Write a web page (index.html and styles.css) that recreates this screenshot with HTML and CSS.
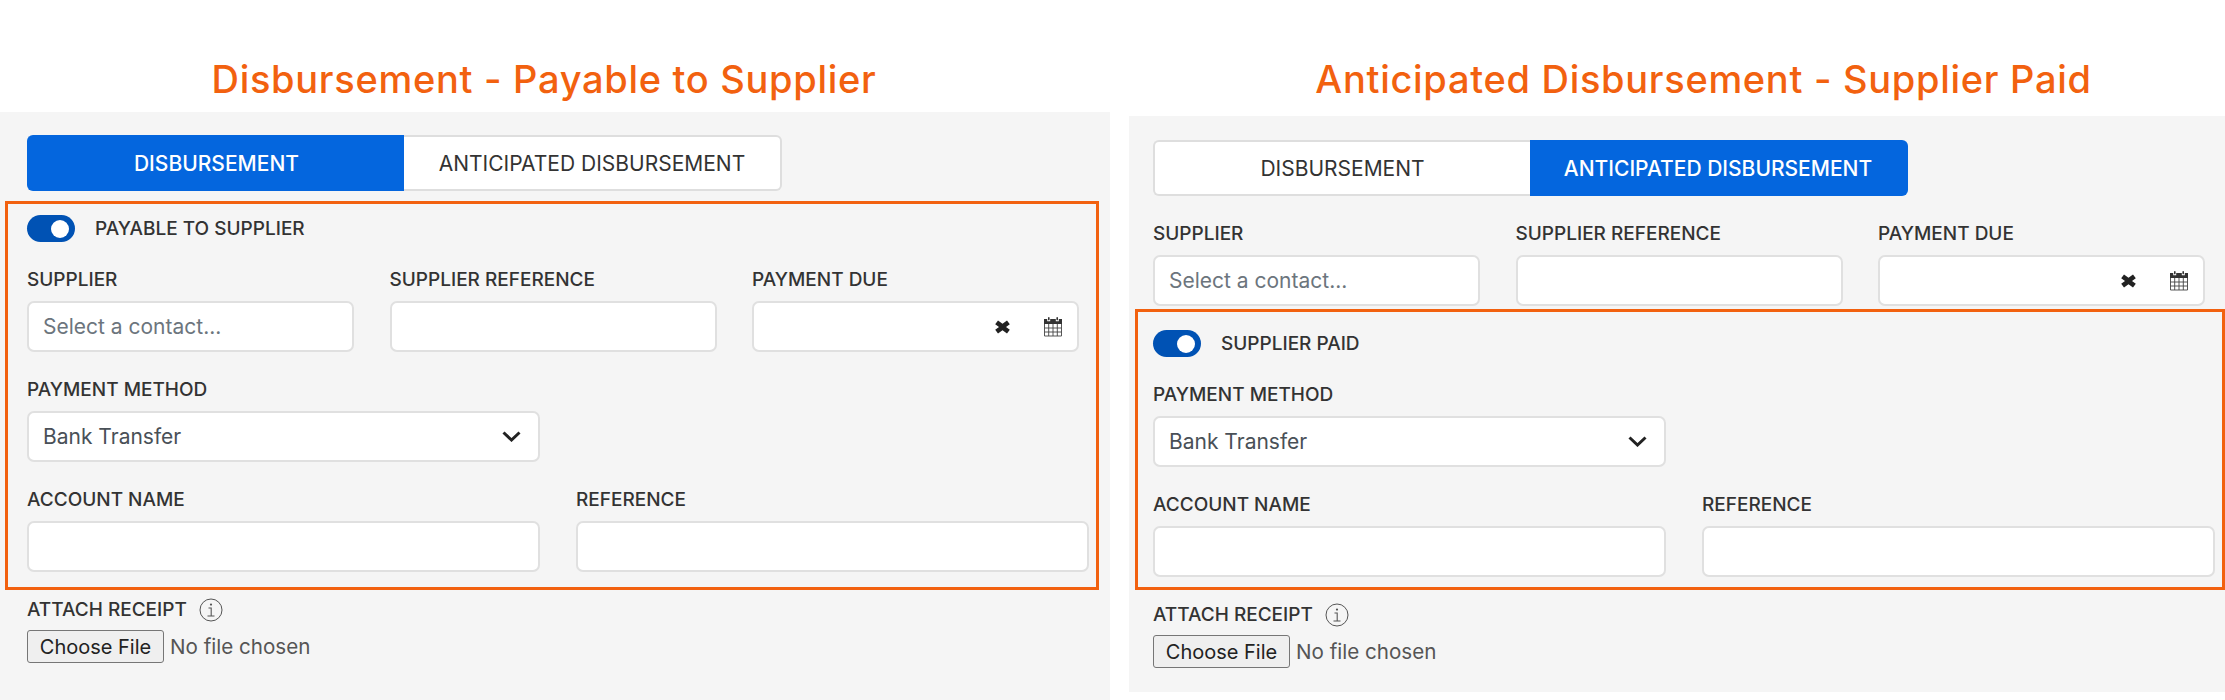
FILE: index.html
```html
<!DOCTYPE html>
<html lang="en">
<head>
  <meta charset="UTF-8" />
  <title>Disbursement</title>
  <link rel="stylesheet" href="styles.css">
</head>
<body>
  <div class="page">

    <section class="col col-left">
      <h1 class="title">Disbursement - Payable to Supplier</h1>
      <div class="panel">
        <div class="tabs">
          <button class="tab active">DISBURSEMENT</button>
          <button class="tab">ANTICIPATED DISBURSEMENT</button>
        </div>

        <div class="box">
          <div class="toggle-row">
            <span class="toggle"><span class="knob"></span></span>
            <span class="toggle-label">PAYABLE TO SUPPLIER</span>
          </div>
          <div class="row row-3">
            <div class="field">
              <label>SUPPLIER</label>
              <input class="control" type="text" placeholder="Select a contact...">
            </div>
            <div class="field">
              <label>SUPPLIER REFERENCE</label>
              <input class="control" type="text">
            </div>
            <div class="field">
              <label>PAYMENT DUE</label>
              <div class="control date-control">
                <svg class="icon-clear" viewBox="0 0 15 14"><path d="M3 .6 7.5 3.8 12 .6 14.8 4.2 11 7 14.8 9.8 12 13.4 7.5 10.2 3 13.4.2 9.8 4 7 .2 4.2Z"/></svg>
                <svg class="icon-cal" viewBox="0 0 20 21"><path fill="#333" d="M1 3h3.2v2.2h3V3h5.6v2.2h3V3H19v5H1Z"/><rect x="5" y="1" width="1.6" height="3.4" rx=".8" fill="#333"/><rect x="13.4" y="1" width="1.6" height="3.4" rx=".8" fill="#333"/><path fill="none" stroke="#444" stroke-width=".9" d="M1.5 8v12h17V8M1.5 12h17M1.5 16h17M5.7 8v12M10 8v12M14.3 8v12"/></svg>
              </div>
            </div>
          </div>
          <div class="row row-2">
            <div class="field">
              <label>PAYMENT METHOD</label>
              <select class="control select"><option>Bank Transfer</option></select>
            </div>
          </div>
          <div class="row row-2">
            <div class="field">
              <label>ACCOUNT NAME</label>
              <input class="control" type="text">
            </div>
            <div class="field">
              <label>REFERENCE</label>
              <input class="control" type="text">
            </div>
          </div>
        </div>

        <div class="attach">
          <div class="attach-label">
            <label>ATTACH RECEIPT</label>
            <svg class="icon-info" viewBox="0 0 24 24"><circle cx="12" cy="12" r="11" fill="none" stroke="#555" stroke-width="1"/><circle cx="12" cy="6.6" r="1.1" fill="#555"/><path fill="none" stroke="#555" stroke-width="1.1" d="M9.5 10h2.7v8M8.5 18h7"/></svg>
          </div>
          <input class="file" type="file">
        </div>
      </div>
    </section>

    <section class="col col-right">
      <h1 class="title">Anticipated Disbursement - Supplier Paid</h1>
      <div class="panel">
        <div class="tabs">
          <button class="tab">DISBURSEMENT</button>
          <button class="tab active">ANTICIPATED DISBURSEMENT</button>
        </div>

        <div class="row row-3 top-row">
          <div class="field">
            <label>SUPPLIER</label>
            <input class="control" type="text" placeholder="Select a contact...">
          </div>
          <div class="field">
            <label>SUPPLIER REFERENCE</label>
            <input class="control" type="text">
          </div>
          <div class="field">
            <label>PAYMENT DUE</label>
            <div class="control date-control">
              <svg class="icon-clear" viewBox="0 0 15 14"><path d="M3 .6 7.5 3.8 12 .6 14.8 4.2 11 7 14.8 9.8 12 13.4 7.5 10.2 3 13.4.2 9.8 4 7 .2 4.2Z"/></svg>
              <svg class="icon-cal" viewBox="0 0 20 21"><path fill="#333" d="M1 3h3.2v2.2h3V3h5.6v2.2h3V3H19v5H1Z"/><rect x="5" y="1" width="1.6" height="3.4" rx=".8" fill="#333"/><rect x="13.4" y="1" width="1.6" height="3.4" rx=".8" fill="#333"/><path fill="none" stroke="#444" stroke-width=".9" d="M1.5 8v12h17V8M1.5 12h17M1.5 16h17M5.7 8v12M10 8v12M14.3 8v12"/></svg>
            </div>
          </div>
        </div>

        <div class="box">
          <div class="toggle-row">
            <span class="toggle"><span class="knob"></span></span>
            <span class="toggle-label">SUPPLIER PAID</span>
          </div>
          <div class="row row-2">
            <div class="field">
              <label>PAYMENT METHOD</label>
              <select class="control select"><option>Bank Transfer</option></select>
            </div>
          </div>
          <div class="row row-2">
            <div class="field">
              <label>ACCOUNT NAME</label>
              <input class="control" type="text">
            </div>
            <div class="field">
              <label>REFERENCE</label>
              <input class="control" type="text">
            </div>
          </div>
        </div>

        <div class="attach">
          <div class="attach-label">
            <label>ATTACH RECEIPT</label>
            <svg class="icon-info" viewBox="0 0 24 24"><circle cx="12" cy="12" r="11" fill="none" stroke="#555" stroke-width="1"/><circle cx="12" cy="6.6" r="1.1" fill="#555"/><path fill="none" stroke="#555" stroke-width="1.1" d="M9.5 10h2.7v8M8.5 18h7"/></svg>
          </div>
          <input class="file" type="file">
        </div>
      </div>
    </section>

  </div>
</body>
</html>
```

FILE: styles.css
```css
* {
  box-sizing: border-box;
}

html, body {
  margin: 0;
  height: 700px;
  overflow: hidden;
  background: #fff;
}

body {
  font-family: Inter, 'Noto Sans', sans-serif;
  color: #333;
}

.page {
  display: flex;
  align-items: flex-start;
}

.col-left {
  width: 1110px;
  margin-right: 19px;
}

.col-right {
  width: 1096px;
}

.title {
  margin: 0;
  font-size: 38px;
  font-weight: 500;
  letter-spacing: 0.7px;
  line-height: 50px;
  color: #f2610f;
  text-align: center;
}

.col-left .title {
  height: 112px;
  padding: 54px 22px 0 0;
}

.col-right .title {
  height: 116px;
  padding: 54px 0 0 53px;
}

.panel {
  background: #f5f5f5;
}

.col-left .panel {
  height: 588px;
  padding: 23px 0 0 27px;
}

.col-right .panel {
  height: 576px;
  padding: 24px 0 0 24px;
}

/* tabs */
.tabs {
  display: flex;
}

.tab {
  width: 377px;
  height: 56px;
  padding: 0;
  background: #fff;
  border: 2px solid #dedede;
  font-family: inherit;
  font-size: 21px;
  color: #333;
}

.tab:first-child {
  border-radius: 6px 0 0 6px;
  border-right: 0;
}

.tab:last-child {
  width: 378px;
  border-radius: 0 6px 6px 0;
  border-left: 0;
}

.tab.active {
  background: #0466de;
  border-color: #0466de;
  color: #fff;
  font-weight: 500;
}

/* orange box */
.box {
  display: flex;
  flex-direction: column;
  gap: 26px;
  border: 3px solid #f2610f;
}

.col-left .box {
  width: 1094px;
  margin: 10px 0 0 -22px;
  padding: 11px 0 15px 19px;
}

.col-right .box {
  width: 1090px;
  margin: 3px 0 0 -18px;
  padding: 18px 0 10px 15px;
}

.toggle-row {
  display: flex;
  align-items: center;
  gap: 20px;
  height: 27px;
}

.toggle {
  display: flex;
  justify-content: flex-end;
  align-items: center;
  width: 48px;
  height: 27px;
  padding-right: 6px;
  border-radius: 14px;
  background: #0052b4;
}

.knob {
  width: 18px;
  height: 18px;
  border-radius: 50%;
  background: #fff;
}

.toggle-label,
label {
  font-size: 19px;
  font-weight: 500;
  line-height: 22px;
  color: #333;
}

label {
  padding-top: 1px;
}

/* form rows */
.row {
  display: grid;
  column-gap: 36px;
}

.row-3 {
  grid-template-columns: repeat(3, 327px);
  column-gap: 35.5px;
}

.row-2 {
  grid-template-columns: repeat(2, 513px);
}

.top-row {
  margin-top: 26px;
}

.field {
  display: flex;
  flex-direction: column;
  gap: 10px;
}

.control {
  display: block;
  width: 100%;
  height: 51px;
  padding: 0 14px;
  background: #fff;
  border: 2px solid #e0e0e0;
  border-radius: 7px;
  font-family: inherit;
  font-size: 21px;
  color: #495057;
  outline: none;
}

.control::placeholder {
  color: #6c757d;
}

.select {
  appearance: none;
  background-image: url("data:image/svg+xml,%3Csvg xmlns='http://www.w3.org/2000/svg' viewBox='0 0 19 11'%3E%3Cpath fill='none' stroke='%23222' stroke-width='3' d='M1.5 1.5 9.5 9 17.5 1.5'/%3E%3C/svg%3E");
  background-repeat: no-repeat;
  background-position: right 17px center;
  background-size: 19px 11px;
}

.date-control {
  display: flex;
  align-items: center;
  justify-content: flex-end;
  padding: 0 14px 0 0;
}

.icon-clear {
  width: 15px;
  height: 14px;
  margin-right: 33px;
  fill: #222;
}

.icon-cal {
  width: 20px;
  height: 21px;
}

/* receipt */
.attach-label {
  display: flex;
  align-items: center;
  gap: 12px;
  height: 23px;
}

.col-left .attach {
  margin-top: 8px;
}

.col-right .attach {
  margin-top: 13px;
}

.icon-info {
  width: 24px;
  height: 24px;
}

.file {
  display: block;
  margin-top: 9px;
  font-family: Inter, sans-serif;
  font-size: 20.6px;
  color: #555;
}

.file::file-selector-button {
  width: 137px;
  height: 33px;
  margin-right: 6px;
  padding: 0;
  font-family: Inter, sans-serif;
  font-size: 20px;
  color: #222;
  background: #efefef;
  border: 1px solid #767676;
  border-radius: 3px;
}
```
